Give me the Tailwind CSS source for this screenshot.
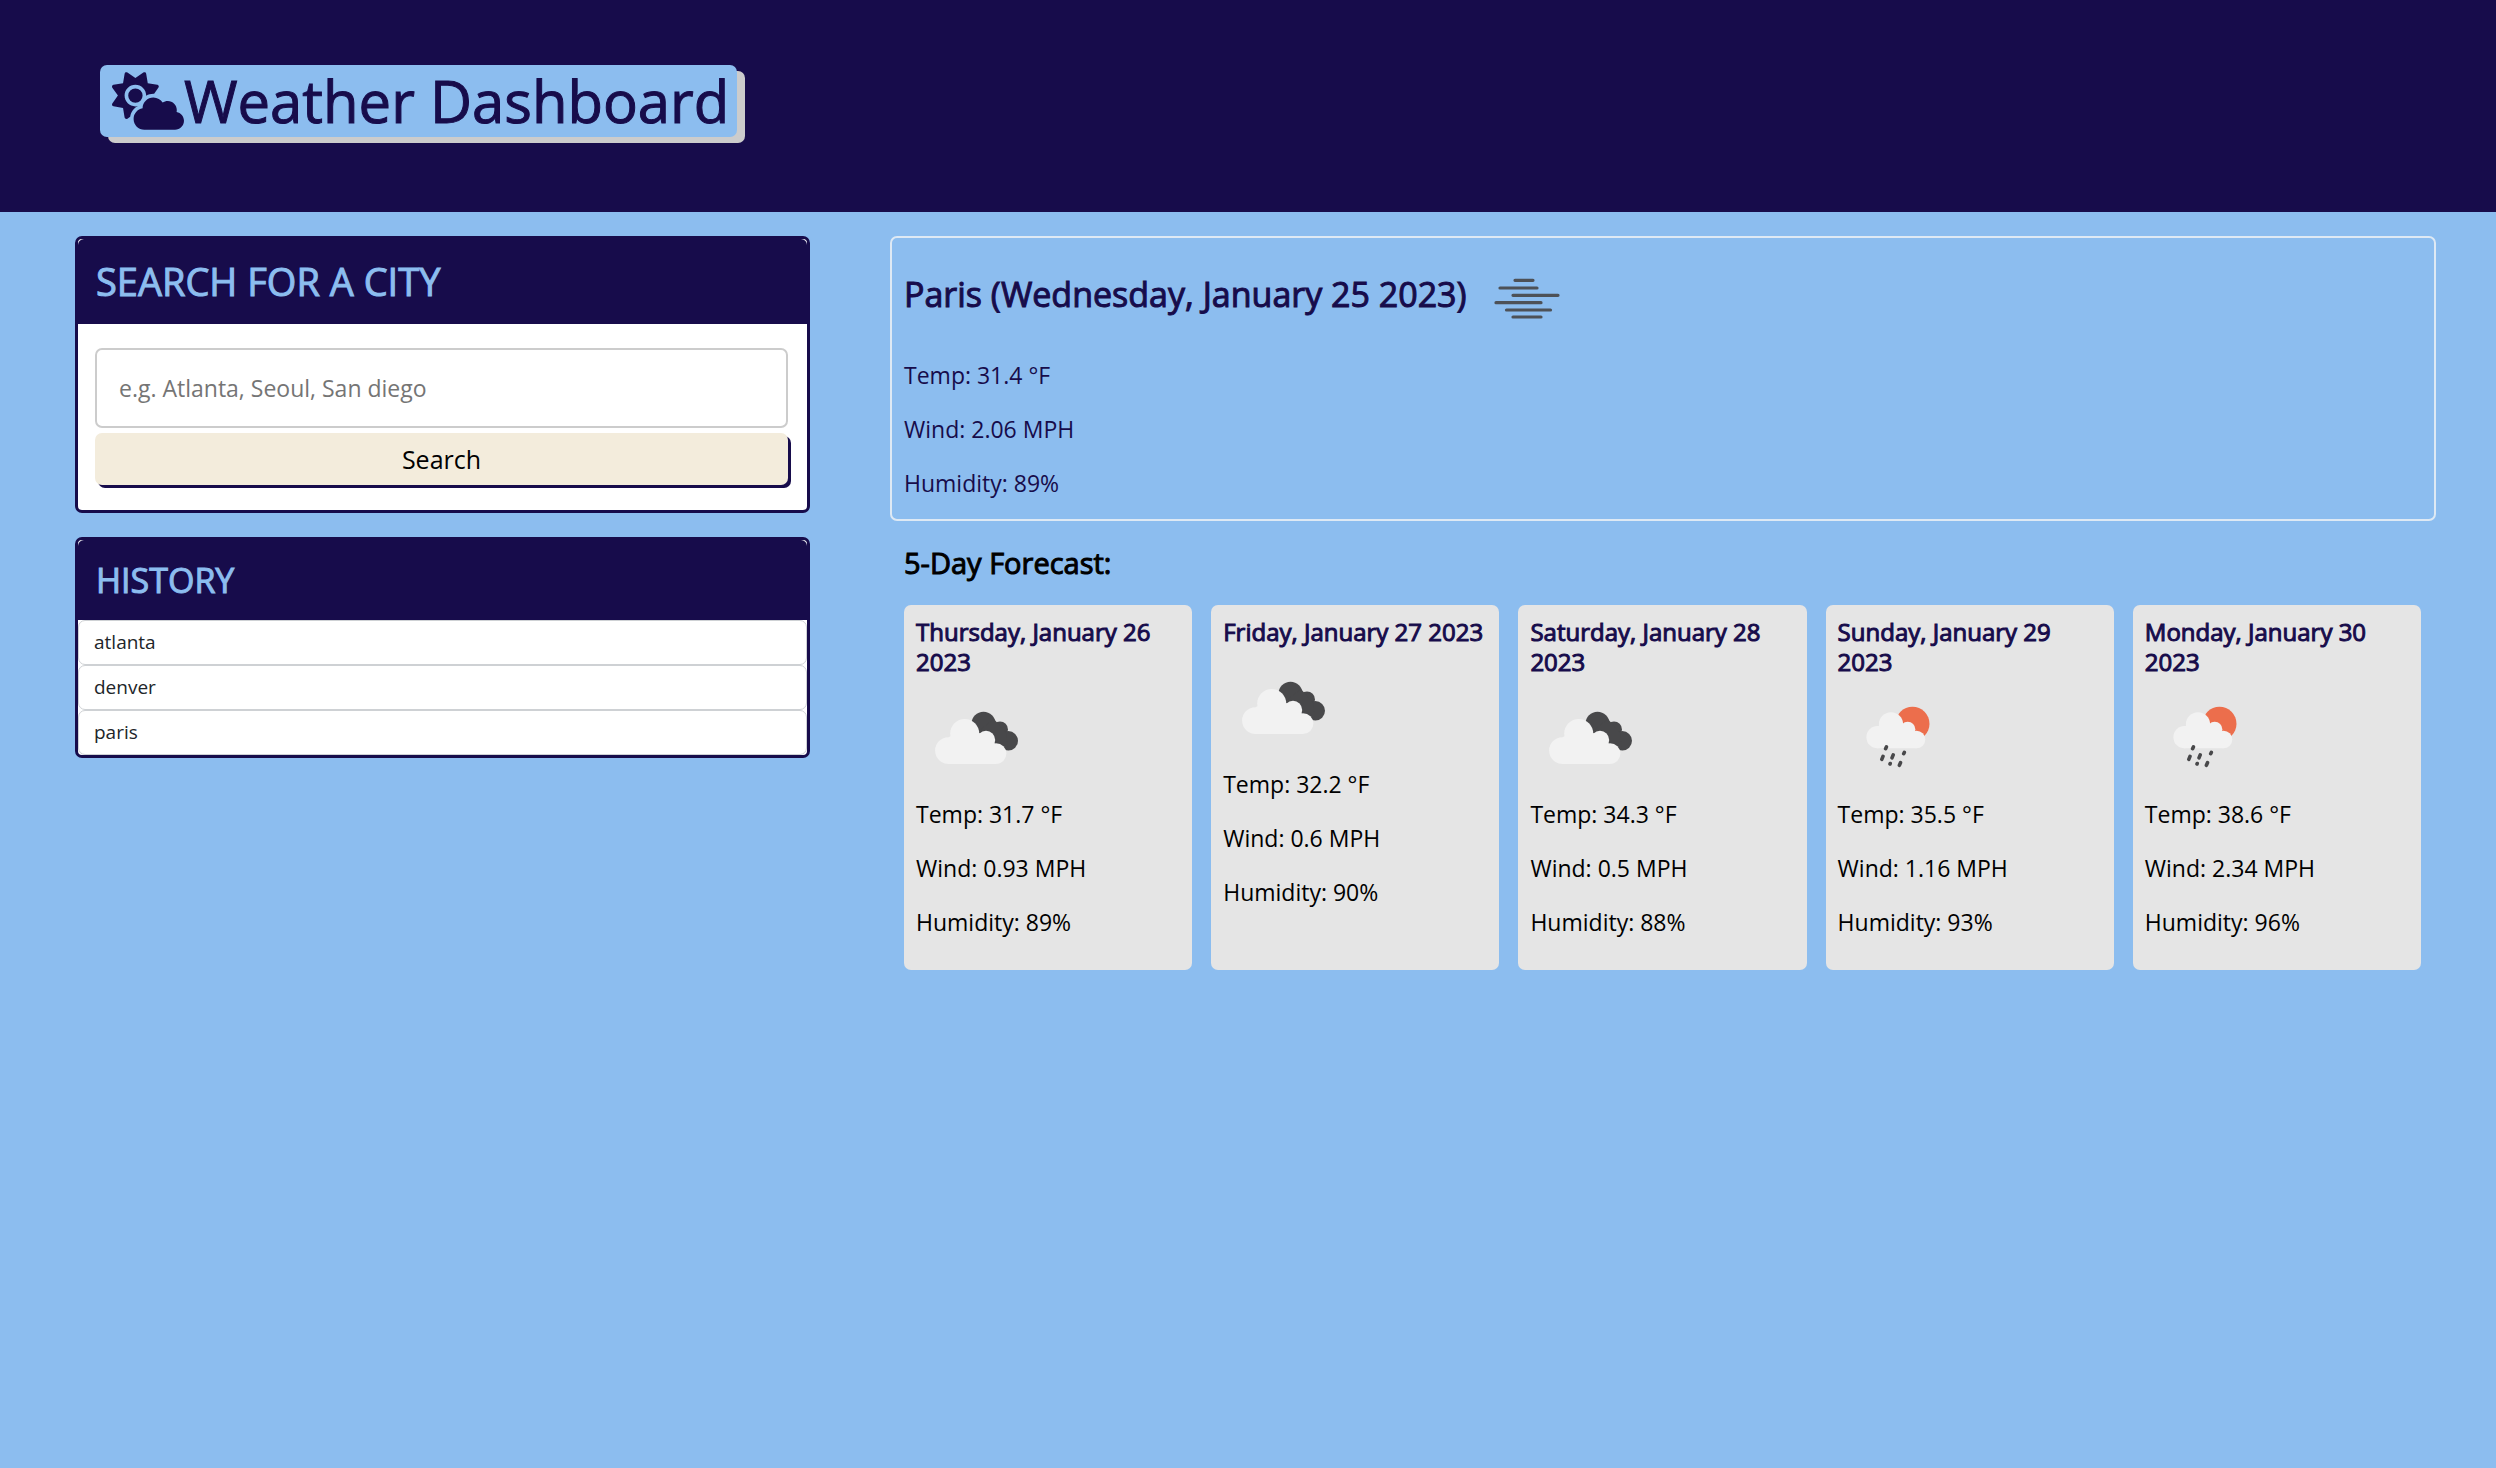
<!DOCTYPE html>
<html lang="en">
<head>
<meta charset="utf-8">
<meta name="viewport" content="width=device-width, initial-scale=1">
<title>Weather Dashboard</title>
<script src="https://cdn.jsdelivr.net/npm/@tailwindcss/browser@4"></script>
</head>
<body class="min-h-screen bg-[#8cbdef] font-['Open_Sans',sans-serif] text-[23px] leading-[34px] text-black">

<!-- Shared weather icons -->
<svg class="hidden" aria-hidden="true">
  <symbol id="mist" viewBox="0 0 120 120">
    <g stroke="#48484a" stroke-opacity=".92" stroke-width="3.2" stroke-linecap="round">
      <path d="M48 42.3H66M33 50H70M46 57.3H91M29 64.7H74M39.500 72H83.500M46 79H74"/>
    </g>
  </symbol>
  <symbol id="clouds" viewBox="0 0 120 120">
    <g fill="#48484a">
      <circle cx="67.500" cy="46.700" r="12"/><circle cx="84" cy="52.500" r="8"/><circle cx="92.300" cy="63.800" r="9.700"/>
      <path d="M60 56L78 42L90 56L92 73L78 72Z"/>
    </g>
    <g fill="#f2f2f2">
      <circle cx="48.700" cy="56.500" r="14.500"/><circle cx="32.500" cy="73.600" r="13.400"/><circle cx="70" cy="63" r="9.200"/><circle cx="80" cy="76.600" r="10.400"/>
      <path d="M32.500 87V60.300L48 52L70 58L80 68V87Z"/>
    </g>
  </symbol>
  <symbol id="rain" viewBox="0 0 120 120">
    <circle cx="74.500" cy="46.800" r="17" fill="#ec6e4c"/>
    <g fill="#f2f2f2">
      <circle cx="53" cy="47.400" r="12.100"/><circle cx="39.500" cy="60.200" r="11.100"/><circle cx="69.700" cy="52.500" r="7.700"/><circle cx="78.500" cy="62.500" r="8.800"/>
      <path d="M39.500 71.300V49.200L53 44L70 49L78.500 56V71.300Z"/>
    </g>
    <g stroke="#48484a" stroke-width="3.600" stroke-linecap="round">
      <path d="M48.400 69.900L47.600 71.700M45 79.300L43.800 82.300M55.200 77.900L54 80.900M66.300 75.400L65.700 76.700M52.200 86.500L52 87M62.500 85.700L61.400 88.300"/>
    </g>
  </symbol>
</svg>

<header class="flex h-[212px] items-start bg-[#170c4b] pt-[65px] pl-[100px]">
  <h1 class="flex items-center rounded-[7px] bg-[#8cbdef] pr-2 pl-3 text-[58px] leading-[72px] font-normal whitespace-nowrap text-[#170c4b] shadow-[8px_6px_0_#cccccc] [-webkit-text-stroke:1px_#170c4b]">
    <svg class="h-[58px] w-[72px] fill-current [-webkit-text-stroke:0]" viewBox="0 0 640 512" aria-hidden="true"><path d="M294.2 1.2c5.1 2.1 8.7 6.700 9.600 12.100l14.100 84.700 84.700 14.100c5.400 .9 10 4.500 12.100 9.600s1.500 10.900-1.600 15.400l-38.500 55c-2.200-.1-4.400-.2-6.700-.2c-23.300 0-45.100 6.200-64 17.100l0-1.100c0-53-43-96-96-96s-96 43-96 96s43 96 96 96c8.100 0 15.900-1 23.400-2.900c-36.600 18.100-63.300 53.100-69.800 94.900l-24.400 17c-4.500 3.200-10.300 3.800-15.400 1.600s-8.700-6.700-9.600-12.100L98.100 317.400 13.400 303.300c-5.400-.9-10-4.500-12.100-9.600s-1.500-10.900 1.600-15.400L52.500 208 2.900 137.200c-3.200-4.500-3.800-10.300-1.600-15.400s6.700-8.700 12.100-9.600L98.100 98.100l14.100-84.700c.9-5.400 4.500-10 9.600-12.100s10.900-1.500 15.400 1.600L208 52.500 278.800 2.900c4.500-3.200 10.300-3.800 15.400-1.600zM208 144a64 64 0 1 1 0 128 64 64 0 1 1 0-128zM639.900 431.900c0 44.200-35.800 80-80 80l-271.900 0c-53 0-96-43-96-96c0-47.600 34.600-87 80-94.600l0-1.300c0-53 43-96 96-96c34.900 0 65.400 18.600 82.200 46.400c13-9.100 28.800-14.400 45.800-14.400c44.200 0 80 35.800 80 80c0 5.900-.6 11.700-1.900 17.200c37.400 6.700 65.800 39.400 65.800 78.700z"/></svg>
    <span>Weather Dashboard</span>
  </h1>
</header>

<main class="grid grid-cols-[735fr_1546fr] items-start gap-20 pt-6 pr-[60px] pb-6 pl-[75px]">

  <aside class="flex flex-col gap-6">
    <section class="rounded-[7px] border-3 border-[#170c4b] bg-white">
      <h2 class="rounded-t-[6px] bg-[#170c4b] px-[18px] py-5 text-[38px] leading-[45px] text-[#8cbdef] [-webkit-text-stroke:1px_#8cbdef]"><label for="city">SEARCH FOR A CITY</label></h2>
      <form class="flex flex-col gap-[5px] pr-[19px] pl-[17px] pt-6 pb-[25px]" onsubmit="return false">
        <input id="city" type="text" placeholder="e.g. Atlanta, Seoul, San diego" class="h-20 w-full rounded-[7px] border-2 border-[#cccccc] bg-white px-[22px] text-[23px] placeholder:text-[#757575]">
        <button type="submit" class="h-[52px] w-full rounded-[7px] bg-[#f3ecdc] text-[25px] text-black shadow-[3px_3px_0_#170c4b]">Search</button>
      </form>
    </section>

    <section class="rounded-[7px] border-3 border-[#170c4b] bg-white">
      <h2 class="rounded-t-[6px] bg-[#170c4b] px-[18px] py-5 text-[34px] leading-[40px] text-[#8cbdef] [-webkit-text-stroke:1px_#8cbdef]">HISTORY</h2>
      <ul class="text-[19px] text-[#212529]">
        <li><button type="button" class="block h-[45px] w-full rounded-[7px] border border-[#ced1d4] bg-white px-[15px] pb-[2px] text-left">atlanta</button></li>
        <li><button type="button" class="block h-[45px] w-full rounded-[7px] border border-[#ced1d4] bg-white px-[15px] pb-[2px] text-left">denver</button></li>
        <li><button type="button" class="block h-[45px] w-full rounded-[7px] border border-[#ced1d4] bg-white px-[15px] pb-[2px] text-left">paris</button></li>
      </ul>
    </section>
  </aside>

  <div>
    <section class="rounded-[7px] border-2 border-[#dee9f4] px-3 pb-[19px] text-[#170c4b]">
      <h2 class="text-[34px] leading-[40px] [-webkit-text-stroke:1px_#170c4b]">Paris (Wednesday, January 25 2023)<svg class="inline-block size-[120px] align-middle" role="img" aria-label="mist"><use href="#mist"/></svg></h2>
      <div class="flex flex-col gap-5">
        <p>Temp: 31.4 °F</p>
        <p>Wind: 2.06 MPH</p>
        <p>Humidity: 89%</p>
      </div>
    </section>

    <section class="pr-[15px] pl-[14px]">
      <h3 class="py-[22px] text-[29px] leading-[40px] [-webkit-text-stroke:1px_#000]">5-Day Forecast:</h3>
      <div class="grid grid-cols-5 gap-[19px]">
        <article class="flex flex-col rounded-[7px] bg-[#e5e5e5] px-3 pt-3 pb-[31px]">
          <h4 class="text-[24px] leading-[30px] text-[#170c4b] [-webkit-text-stroke:1px_#170c4b]">Thursday, January 26 2023</h4>
          <svg class="size-[120px]" role="img" aria-label="broken clouds"><use href="#clouds"/></svg>
          <div class="flex flex-col gap-5"><p>Temp: 31.7 °F</p><p>Wind: 0.93 MPH</p><p>Humidity: 89%</p></div>
        </article>
        <article class="flex flex-col rounded-[7px] bg-[#e5e5e5] px-3 pt-3 pb-[31px]">
          <h4 class="text-[24px] leading-[30px] text-[#170c4b] [-webkit-text-stroke:1px_#170c4b]">Friday, January 27 2023</h4>
          <svg class="size-[120px]" role="img" aria-label="broken clouds"><use href="#clouds"/></svg>
          <div class="flex flex-col gap-5"><p>Temp: 32.2 °F</p><p>Wind: 0.6 MPH</p><p>Humidity: 90%</p></div>
        </article>
        <article class="flex flex-col rounded-[7px] bg-[#e5e5e5] px-3 pt-3 pb-[31px]">
          <h4 class="text-[24px] leading-[30px] text-[#170c4b] [-webkit-text-stroke:1px_#170c4b]">Saturday, January 28 2023</h4>
          <svg class="size-[120px]" role="img" aria-label="broken clouds"><use href="#clouds"/></svg>
          <div class="flex flex-col gap-5"><p>Temp: 34.3 °F</p><p>Wind: 0.5 MPH</p><p>Humidity: 88%</p></div>
        </article>
        <article class="flex flex-col rounded-[7px] bg-[#e5e5e5] px-3 pt-3 pb-[31px]">
          <h4 class="text-[24px] leading-[30px] text-[#170c4b] [-webkit-text-stroke:1px_#170c4b]">Sunday, January 29 2023</h4>
          <svg class="size-[120px]" role="img" aria-label="rain"><use href="#rain"/></svg>
          <div class="flex flex-col gap-5"><p>Temp: 35.5 °F</p><p>Wind: 1.16 MPH</p><p>Humidity: 93%</p></div>
        </article>
        <article class="flex flex-col rounded-[7px] bg-[#e5e5e5] px-3 pt-3 pb-[31px]">
          <h4 class="text-[24px] leading-[30px] text-[#170c4b] [-webkit-text-stroke:1px_#170c4b]">Monday, January 30 2023</h4>
          <svg class="size-[120px]" role="img" aria-label="rain"><use href="#rain"/></svg>
          <div class="flex flex-col gap-5"><p>Temp: 38.6 °F</p><p>Wind: 2.34 MPH</p><p>Humidity: 96%</p></div>
        </article>
      </div>
    </section>
  </div>
</main>
</body>
</html>
